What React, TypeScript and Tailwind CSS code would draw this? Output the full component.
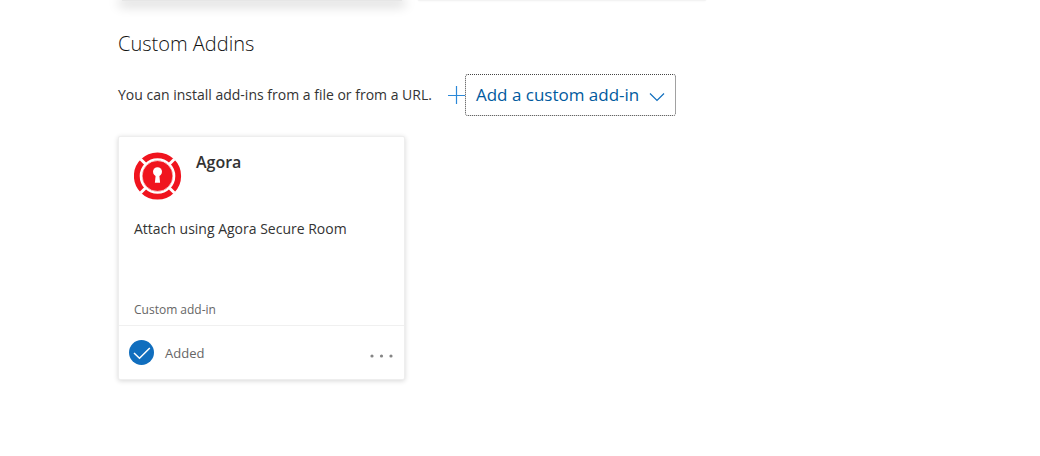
import React from "react";

function AgoraLogo() {
  return (
    <svg viewBox="0 0 48 48" className="h-12 w-12 shrink-0" aria-hidden="true">
      <circle cx="23.5" cy="24" r="20.7" fill="none" stroke="#f0141e" strokeWidth="5.8" />
      <path d="M6.5 7 40.5 41M40.5 7 6.5 41" stroke="#fff" strokeWidth="3" />
      <circle cx="23.5" cy="24" r="15.4" fill="#f0141e" stroke="#fff" strokeWidth="0.6" />
      <circle cx="23.5" cy="19.8" r="4.5" fill="#fff" />
      <path d="M21.8 22h3.4l.9 8.7h-5.2z" fill="#fff" />
    </svg>
  );
}

function PreviousCards() {
  return (
    <div className="flex gap-3" aria-hidden="true">
      <div className="w-72 px-1">
        <div className="h-px bg-[#e6e6e6] shadow-[0_2px_12px_3px_rgba(0,0,0,0.18)]" />
      </div>
      <div className="h-px w-72 rounded-b-sm bg-[#f3f3f3] shadow-[0_0_2px_rgba(0,0,0,0.08)]" />
    </div>
  );
}

function AddinCard() {
  return (
    <article className="mt-5 w-[287px] rounded-xs border border-[#eeeeee] bg-white shadow-[0_1px_5px_rgba(0,0,0,0.16)]">
      <div className="flex h-[188px] flex-col px-[15px] pt-[15px] pb-[3px]">
        <div className="flex gap-[14px]">
          <AgoraLogo />
          <h3 className="text-base leading-5 font-semibold text-[#333333]">Agora</h3>
        </div>
        <p className="mt-[17px] text-sm leading-6">Attach using Agora Secure Room</p>
        <p className="mt-auto text-xs leading-6 text-[#666666]">Custom add-in</p>
      </div>
      <div className="flex h-[54px] items-center border-t border-[#f0f0f0] pr-[7px] pl-[10px]">
        <svg viewBox="0 0 25 25" className="h-[25px] w-[25px]" aria-hidden="true">
          <circle cx="12.5" cy="12.5" r="12.5" fill="#106ebe" />
          <path d="m5 13 5.5 5.3L20.8 8" fill="none" stroke="#fff" strokeWidth="1.5" />
        </svg>
        <span className="ml-[11px] text-[13px] leading-5 text-[#666666]">Added</span>
        <button type="button" aria-label="More options" className="ml-auto flex h-8 items-center px-1 pt-[7px]">
          <svg viewBox="0 0 24 4" className="h-1 w-6" fill="#858585" aria-hidden="true">
            <circle cx="3" cy="2" r="1.6" />
            <circle cx="12.5" cy="2" r="1.6" />
            <circle cx="22" cy="2" r="1.6" />
          </svg>
        </button>
      </div>
    </article>
  );
}

export default function App() {
  return (
    <main className="min-h-screen bg-white pr-4 pl-[118px] font-['Open_Sans','Noto_Sans',sans-serif] text-[#333333]">
      <PreviousCards />
      <h2 className="mt-[27px] text-xl leading-8 font-light text-[#111111]">Custom Addins</h2>
      <div className="mt-[14px] flex items-center">
        <p className="text-sm leading-6">You can install add-ins from a file or from a URL.</p>
        <svg viewBox="0 0 17 18" className="ml-4 h-[18px] w-[17px]" stroke="#2b88d8" strokeWidth="1.2" aria-hidden="true">
          <path d="M0 9.5h17M8.5 0v18" />
        </svg>
        <button
          type="button"
          aria-haspopup="menu"
          className="flex h-[42px] items-center gap-[10px] rounded-[3px] border border-dotted border-[#444444] px-[10px] text-[17px] leading-6 text-[#005a9e]"
        >
          Add a custom add-in
          <svg viewBox="0 0 16 10" className="mt-1 h-[10px] w-4" fill="none" stroke="#106ebe" strokeWidth="1.2" aria-hidden="true">
            <path d="m1 1.5 7 7 7-7" />
          </svg>
        </button>
      </div>
      <AddinCard />
    </main>
  );
}
